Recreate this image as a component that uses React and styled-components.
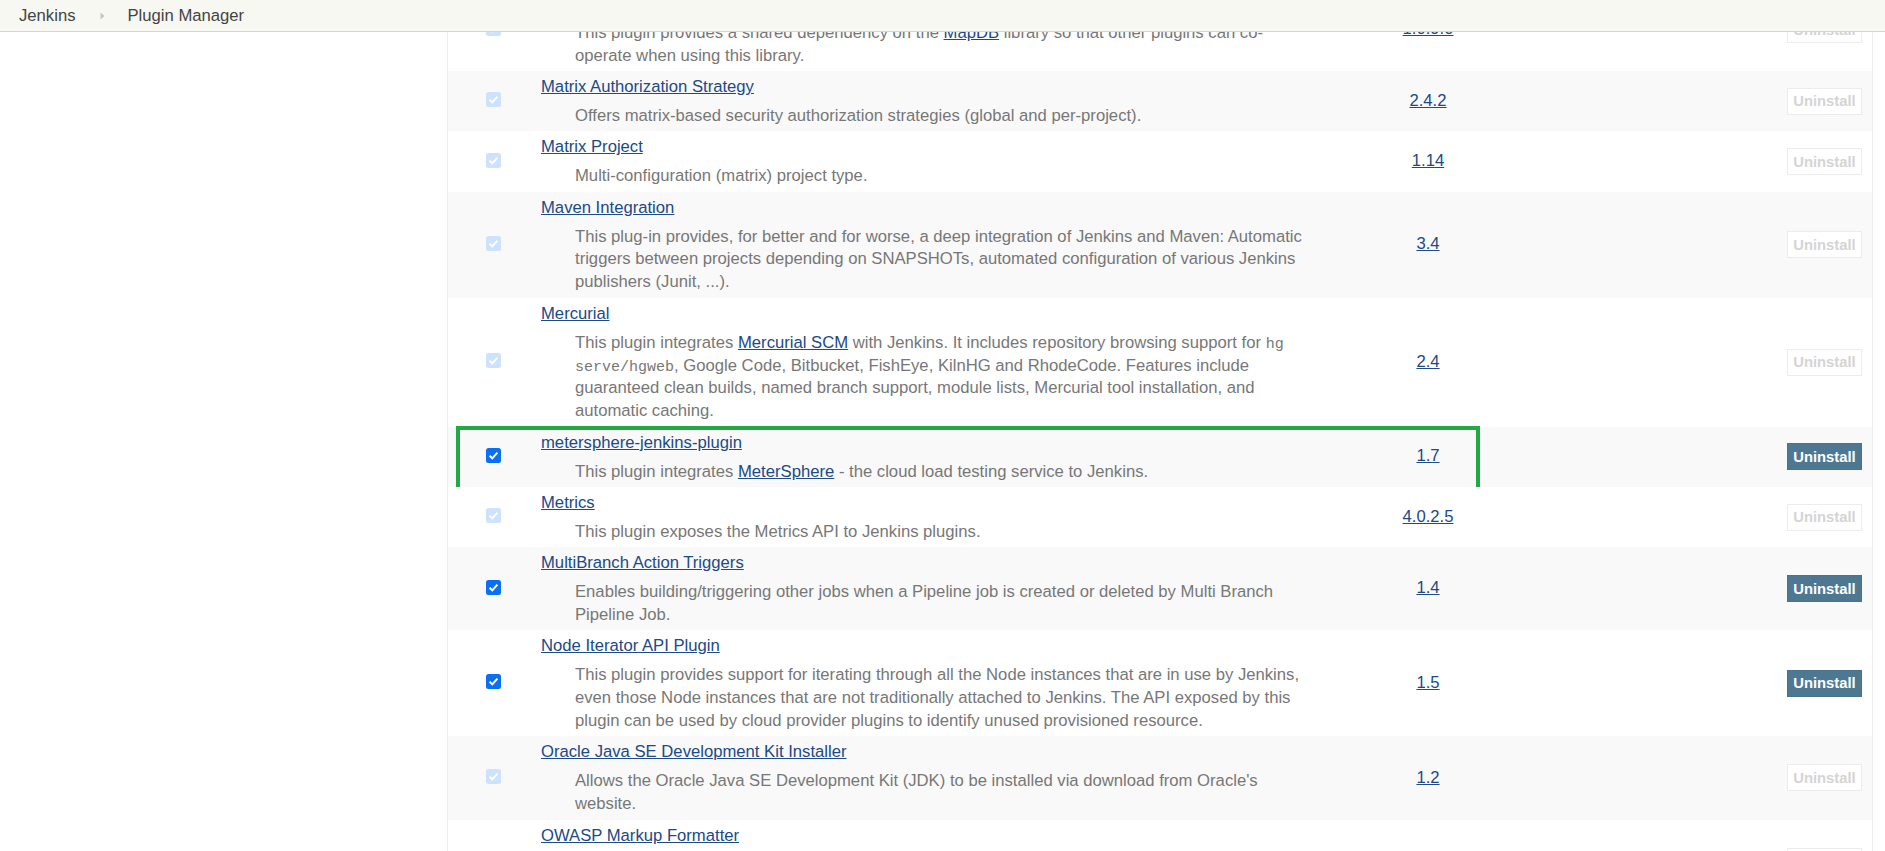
import React, { useLayoutEffect, useRef } from "react";
import styled, { createGlobalStyle } from "styled-components";

const GlobalStyle = createGlobalStyle`
  html, body { margin: 0; padding: 0; background: #fff; }
  body {
    font-family: "Liberation Sans", Arial, Helvetica, sans-serif;
    font-size: 16.67px;
    color: #333;
    overflow: hidden;
  }
  #root { height: 100vh; }
`;

const Page = styled.div`
  display: flex;
  flex-direction: column;
  height: 100vh;
`;

const Breadcrumbs = styled.nav`
  flex: none;
  height: 31px;
  display: flex;
  align-items: center;
  padding-left: 19px;
  background: #f6f8f1;
  border-bottom: 1px solid #d6d8d0;
  color: #444;
  font-size: 16.67px;
`;

const Crumb = styled.span`
  line-height: 31px;
`;

const CrumbArrow = styled.svg`
  width: 5px;
  height: 8px;
  margin: 0 22px 0 25px;
  flex: none;
`;

const Body = styled.div`
  flex: 1;
  min-height: 0;
  display: flex;
`;

const SidePanel = styled.aside`
  flex: none;
  width: 447px;
`;

const MainPanel = styled.main`
  flex: 1;
  min-width: 0;
  padding-right: 12px;
  overflow: hidden;
`;

const Table = styled.div`
  border-left: 1px solid #ececec;
  border-right: 1px solid #ececec;
`;

const Row = styled.div`
  position: relative;
  display: grid;
  grid-template-columns: 90px 783px 214px 1fr;
  background: ${(p) => (p.$shaded ? "#f9f9f9" : "#fff")};
  line-height: 22.92px;
`;

const CheckCell = styled.div`
  display: flex;
  align-items: center;
  justify-content: center;
  padding-bottom: 3px;
`;

const CheckBox = styled.span`
  width: 15px;
  height: 15px;
  border-radius: 2.5px;
  background: ${(p) => (p.$disabled ? "#cde2fd" : "#0a6ff5")};
  display: flex;
  align-items: center;
  justify-content: center;
`;

const NameCell = styled.div`
  padding: 5px 3px 3.4px 3px;
`;

const Title = styled.a`
  color: #204a87;
  text-decoration: underline;
`;

const Desc = styled.div`
  margin: 6px 0 0 34px;
  color: #777;
`;

const InlineLink = styled.a`
  color: #204a87;
  text-decoration: underline;
`;

const Code = styled.code`
  font-family: "Liberation Mono", "DejaVu Sans Mono", monospace;
  font-size: 15px;
  line-height: 1;
  color: #777;
`;

const VersionCell = styled.div`
  display: flex;
  align-items: center;
  justify-content: center;
`;

const VersionLink = styled.a`
  color: #204a87;
  text-decoration: underline;
`;

const ActionCell = styled.div`
  display: flex;
  align-items: center;
  justify-content: flex-end;
  padding-right: 10px;
`;

const UninstallButton = styled.button`
  width: 75px;
  height: 27px;
  box-sizing: border-box;
  padding: 0;
  font-family: "Liberation Sans", Arial, sans-serif;
  font-weight: bold;
  font-size: 14.8px;
  border: 1px solid ${(p) => (p.disabled ? "#ececec" : "#4a7389")};
  background: ${(p) => (p.disabled ? "#fff" : "#4e7891")};
  color: ${(p) => (p.disabled ? "#d4d4d4" : "#fff")};
  cursor: ${(p) => (p.disabled ? "default" : "pointer")};
`;

const Highlight = styled.div`
  position: absolute;
  left: 8px;
  top: -1px;
  width: 1024px;
  height: 65px;
  box-sizing: border-box;
  border: 4px solid #23a847;
  pointer-events: none;
`;

const Check = () => (
  <svg width="11" height="11" viewBox="0 0 11 11">
    <path d="M1.6 5.8 L4.3 8.4 L9.4 2.6" fill="none" stroke="#fff" strokeWidth="2" />
  </svg>
);

const plugins = [
  {
    name: "MapDB API Plugin",
    desc: [
      "This plugin provides a shared dependency on the ",
      { link: "MapDB" },
      " library so that other plugins can co-operate when using this library.",
    ],
    version: "1.0.9.0",
    locked: true,
  },
  {
    name: "Matrix Authorization Strategy",
    desc: ["Offers matrix-based security authorization strategies (global and per-project)."],
    version: "2.4.2",
    locked: true,
  },
  {
    name: "Matrix Project",
    desc: ["Multi-configuration (matrix) project type."],
    version: "1.14",
    locked: true,
  },
  {
    name: "Maven Integration",
    desc: [
      "This plug-in provides, for better and for worse, a deep integration of Jenkins and Maven: Automatic triggers between projects depending on SNAPSHOTs, automated configuration of various Jenkins publishers (Junit, ...).",
    ],
    version: "3.4",
    locked: true,
  },
  {
    name: "Mercurial",
    desc: [
      "This plugin integrates ",
      { link: "Mercurial SCM" },
      " with Jenkins. It includes repository browsing support for ",
      { code: "hg serve/hgweb" },
      ", Google Code, Bitbucket, FishEye, KilnHG and RhodeCode. Features include guaranteed clean builds, named branch support, module lists, Mercurial tool installation, and automatic caching.",
    ],
    version: "2.4",
    locked: true,
  },
  {
    name: "metersphere-jenkins-plugin",
    desc: [
      "This plugin integrates ",
      { link: "MeterSphere" },
      " - the cloud load testing service to Jenkins.",
    ],
    version: "1.7",
    locked: false,
    highlight: true,
  },
  {
    name: "Metrics",
    desc: ["This plugin exposes the Metrics API to Jenkins plugins."],
    version: "4.0.2.5",
    locked: true,
  },
  {
    name: "MultiBranch Action Triggers",
    desc: [
      "Enables building/triggering other jobs when a Pipeline job is created or deleted by Multi Branch Pipeline Job.",
    ],
    version: "1.4",
    locked: false,
  },
  {
    name: "Node Iterator API Plugin",
    desc: [
      "This plugin provides support for iterating through all the Node instances that are in use by Jenkins, even those Node instances that are not traditionally attached to Jenkins. The API exposed by this plugin can be used by cloud provider plugins to identify unused provisioned resource.",
    ],
    version: "1.5",
    locked: false,
  },
  {
    name: "Oracle Java SE Development Kit Installer",
    desc: [
      "Allows the Oracle Java SE Development Kit (JDK) to be installed via download from Oracle's website.",
    ],
    version: "1.2",
    locked: true,
  },
  {
    name: "OWASP Markup Formatter",
    desc: [
      "Uses the OWASP Java HTML Sanitizer to allow safe-seeming HTML markup to be entered in project descriptions and the like.",
    ],
    version: "1.5",
    locked: true,
  },
  {
    name: "PAM Authentication",
    desc: ["Adds Unix Pluggable Authentication Module (PAM) support to Jenkins."],
    version: "1.5.1",
    locked: true,
  },
];

function renderDesc(parts) {
  return parts.map((part, i) => {
    if (typeof part === "string") return <React.Fragment key={i}>{part}</React.Fragment>;
    if (part.link) return <InlineLink key={i} href="#">{part.link}</InlineLink>;
    return <Code key={i}>{part.code}</Code>;
  });
}

export default function App() {
  const scrollRef = useRef(null);
  useLayoutEffect(() => {
    if (scrollRef.current) scrollRef.current.scrollTop = 44;
  }, []);

  return (
    <>
      <GlobalStyle />
      <Page>
        <Breadcrumbs>
          <Crumb>Jenkins</Crumb>
          <CrumbArrow viewBox="0 0 5 8">
            <path d="M0.5 0.5 L4.5 4 L0.5 7.5 Z" fill="#c4c4c4" />
          </CrumbArrow>
          <Crumb>Plugin Manager</Crumb>
        </Breadcrumbs>
        <Body>
          <SidePanel />
          <MainPanel ref={scrollRef}>
            <Table>
              {plugins.map((p, i) => (
                <Row key={p.name} $shaded={i % 2 === 1}>
                  <CheckCell>
                    <CheckBox $disabled={p.locked} role="checkbox" aria-checked="true" aria-disabled={p.locked}>
                      <Check />
                    </CheckBox>
                  </CheckCell>
                  <NameCell>
                    <Title href="#">{p.name}</Title>
                    <Desc>{renderDesc(p.desc)}</Desc>
                  </NameCell>
                  <VersionCell>
                    <VersionLink href="#">{p.version}</VersionLink>
                  </VersionCell>
                  <ActionCell>
                    <UninstallButton disabled={p.locked}>Uninstall</UninstallButton>
                  </ActionCell>
                  {p.highlight && <Highlight />}
                </Row>
              ))}
            </Table>
          </MainPanel>
        </Body>
      </Page>
    </>
  );
}
